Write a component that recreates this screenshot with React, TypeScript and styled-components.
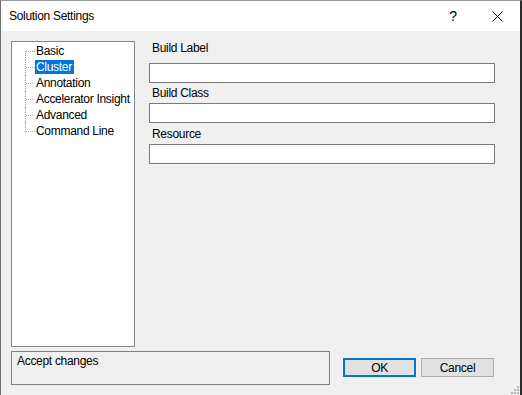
import React from 'react'
import styled, { createGlobalStyle } from 'styled-components'

const GlobalStyle = createGlobalStyle`
    html, body {
        margin: 0;
        padding: 0;
        background: #f0f0f0;
    }
    body {
        font-family: 'Liberation Sans', Arial, sans-serif;
        font-size: 12px;
        letter-spacing: -0.3px;
        color: #000;
    }
`

const Window = styled.div`
    width: 522px;
    height: 395px;
    box-sizing: border-box;
    display: flex;
    flex-direction: column;
    border-left: 1px solid #707070;
    border-right: 2px solid #2b2b2b;
    border-top: 1px solid #9a9a9a;
    background: #f0f0f0;
    position: relative;
`

const TitleBar = styled.div`
    height: 30px;
    background: #fff;
    display: flex;
    align-items: center;
    padding-left: 8px;
    font-size: 12px;
`

const TitleText = styled.div`
    flex: 1;
`

const TitleButton = styled.div<{ shift?: number }>`
    width: 46px;
    height: 30px;
    box-sizing: border-box;
    padding-left: ${(p) => p.shift ?? 0}px;
    display: flex;
    align-items: center;
    justify-content: center;
    font-size: 14px;
`

const Body = styled.div`
    flex: 1;
    padding: 10px 0 0 10px;
    display: flex;
    flex-direction: column;
`

const Main = styled.div`
    display: flex;
    gap: 14px;
`

const TreeBox = styled.div`
    width: 124px;
    height: 306px;
    box-sizing: border-box;
    border: 1px solid #828790;
    background: #fff;
    padding: 1px 0 0 13px;
`

const TreeRow = styled.div<{ first?: boolean; last?: boolean }>`
    position: relative;
    height: 16px;
    display: flex;
    align-items: center;
    padding-left: 10px;

    &::before {
        content: '';
        position: absolute;
        left: 1px;
        top: 8px;
        width: 9px;
        border-top: 1px dotted #a0a0a0;
    }

    &::after {
        content: '';
        position: absolute;
        left: 0;
        top: ${(p) => (p.first ? '8px' : '0')};
        height: ${(p) => (p.first || p.last ? '9px' : '16px')};
        border-left: 1px dotted #a0a0a0;
    }
`

const TreeLabel = styled.span<{ selected?: boolean }>`
    line-height: 14px;
    padding: 0 2px 0 1px;
    background: ${(p) => (p.selected ? '#0078d7' : 'transparent')};
    color: ${(p) => (p.selected ? '#fff' : '#000')};
    white-space: nowrap;
`

const Fields = styled.div`
    width: 346px;
    display: flex;
    flex-direction: column;
`

const FieldLabel = styled.div<{ top: number; bottom: number }>`
    line-height: 14px;
    padding-left: 3px;
    margin-top: ${(p) => p.top}px;
    margin-bottom: ${(p) => p.bottom}px;
`

const TextInput = styled.div`
    height: 20px;
    box-sizing: border-box;
    border: 1px solid #7a7a7a;
    background: #fff;
`

const Footer = styled.div`
    display: flex;
    margin-top: 4px;
`

const StatusBox = styled.div`
    width: 319px;
    height: 34px;
    box-sizing: border-box;
    border: 1px solid #828282;
    padding: 2px 5px;
    line-height: 14px;
`

const Buttons = styled.div`
    display: flex;
    gap: 5px;
    margin-left: 13px;
    margin-top: 7px;
`

const Button = styled.div<{ primary?: boolean }>`
    width: 73px;
    height: 19px;
    box-sizing: border-box;
    border: ${(p) => (p.primary ? '2px solid #0078d7' : '1px solid #adadad')};
    background: #e1e1e1;
    display: flex;
    align-items: center;
    justify-content: center;
`

const Grip = styled.svg`
    position: absolute;
    right: 1px;
    bottom: 1px;
`

const treeItems = ['Basic', 'Cluster', 'Annotation', 'Accelerator Insight', 'Advanced', 'Command Line']

const fields = [
    { label: 'Build Label', top: 0, bottom: 8 },
    { label: 'Build Class', top: 3, bottom: 3 },
    { label: 'Resource', top: 4, bottom: 3 },
]

const App: React.FC = () => {
    return (
        <>
            <GlobalStyle />
            <Window>
                <TitleBar>
                    <TitleText>Solution Settings</TitleText>
                    <TitleButton shift={4}>?</TitleButton>
                    <TitleButton>
                        <svg width="11" height="11" viewBox="0 0 11 11">
                            <path d="M0.5 0.5 L10.5 10.5 M10.5 0.5 L0.5 10.5" stroke="#000" strokeWidth="1" />
                        </svg>
                    </TitleButton>
                </TitleBar>
                <Body>
                    <Main>
                        <TreeBox>
                            {treeItems.map((item, i) => (
                                <TreeRow key={item} first={i === 0} last={i === treeItems.length - 1}>
                                    <TreeLabel selected={item === 'Cluster'}>{item}</TreeLabel>
                                </TreeRow>
                            ))}
                        </TreeBox>
                        <Fields>
                            {fields.map((f) => (
                                <React.Fragment key={f.label}>
                                    <FieldLabel top={f.top} bottom={f.bottom}>
                                        {f.label}
                                    </FieldLabel>
                                    <TextInput />
                                </React.Fragment>
                            ))}
                        </Fields>
                    </Main>
                    <Footer>
                        <StatusBox>Accept changes</StatusBox>
                        <Buttons>
                            <Button primary>OK</Button>
                            <Button>Cancel</Button>
                        </Buttons>
                    </Footer>
                </Body>
                <Grip width="8" height="8" viewBox="0 0 8 8">
                    <rect x="6" y="0" width="2" height="2" fill="#b8b8b8" />
                    <rect x="3" y="3" width="2" height="2" fill="#b8b8b8" />
                    <rect x="6" y="3" width="2" height="2" fill="#b8b8b8" />
                    <rect x="0" y="6" width="2" height="2" fill="#b8b8b8" />
                    <rect x="3" y="6" width="2" height="2" fill="#b8b8b8" />
                    <rect x="6" y="6" width="2" height="2" fill="#b8b8b8" />
                </Grip>
            </Window>
        </>
    )
}

export default App
